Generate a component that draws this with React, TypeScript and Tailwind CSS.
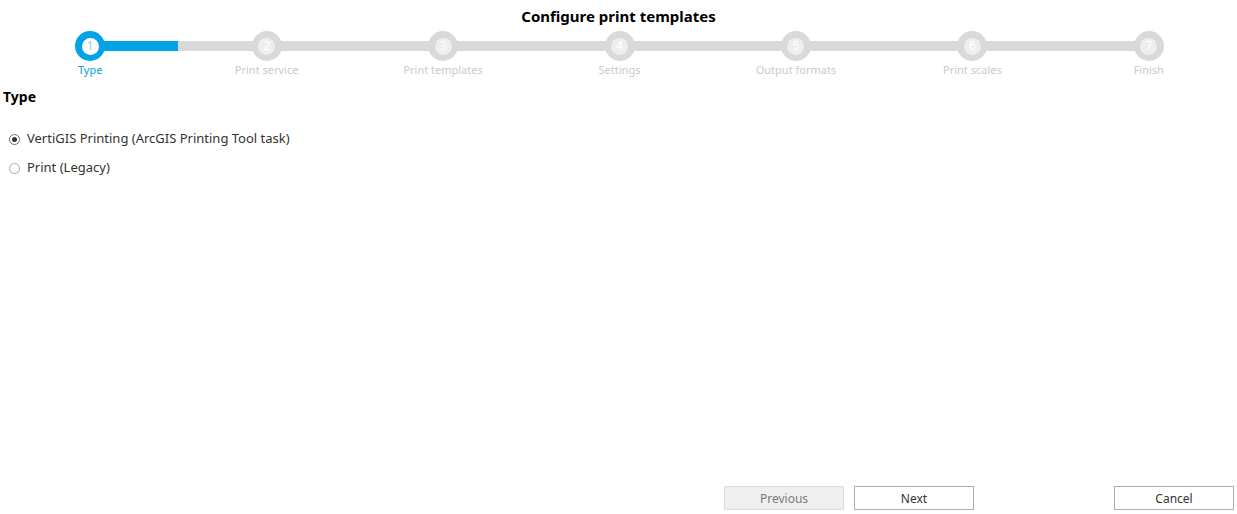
import React from "react";

const steps = ["Type", "Print service", "Print templates", "Settings", "Output formats", "Print scales", "Finish"];

function Step({ label, index, total }: { label: string; index: number; total: number }) {
  const active = index === 0;
  const leftBar = index === 0 ? "bg-transparent" : "bg-[#d9d9d9]";
  const rightBar = index === total - 1 ? "bg-transparent" : active ? "bg-[#00a3e6]" : "bg-[#d9d9d9]";
  return (
    <div className="flex flex-col items-center">
      <div className="flex items-center w-full">
        <div className={`flex-1 h-[10px] ${leftBar}`} />
        <div
          className={`relative z-10 -mx-[3px] w-[30px] h-[30px] rounded-full flex items-center justify-center shrink-0 ${
            active ? "bg-[#00a3e6]" : "bg-[#d9d9d9]"
          }`}
        >
          <div
            className={`w-[17px] h-[17px] rounded-full flex items-center justify-center text-[12px] leading-none ${
              active ? "bg-white text-[#8fd0f0]" : "bg-[#eeeeee] text-white"
            }`}
          >
            {index + 1}
          </div>
        </div>
        <div className={`flex-1 h-[10px] ${rightBar}`} />
      </div>
      <div
        className={`mt-px text-[11px] leading-[15px] ${active ? "text-[#0a9fe0]" : "text-[#cacaca]"}`}
      >
        {label}
      </div>
    </div>
  );
}

function Radio({ checked, label }: { checked: boolean; label: string }) {
  return (
    <div className="flex items-center h-[20px]">
      <div
        className={`ml-[9px] w-[11px] h-[11px] rounded-full border flex items-center justify-center bg-white ${
          checked ? "border-[#6b6b6b]" : "border-[#a8a8a8]"
        }`}
      >
        {checked && <div className="w-[5px] h-[5px] rounded-full bg-[#333]" />}
      </div>
      <span className="ml-[7px] text-[13px] text-[#333]">{label}</span>
    </div>
  );
}

export default function App() {
  return (
    <div
      className="h-screen w-full bg-white flex flex-col overflow-hidden"
      style={{ fontFamily: '"Noto Sans", "Open Sans", sans-serif' }}
    >
      <div className="pt-[6px] text-center text-[15px] leading-[20px] font-bold text-black">
        Configure print templates
      </div>
      <div className="mt-[5px] grid grid-cols-7 pl-[2px]">
        {steps.map((s, i) => (
          <Step key={s} label={s} index={i} total={steps.length} />
        ))}
      </div>
      <div className="mt-[11px] pl-[3px] text-[14px] leading-[18px] font-bold text-black">Type</div>
      <div className="mt-[23px] flex flex-col gap-[9px]">
        <Radio checked label="VertiGIS Printing (ArcGIS Printing Tool task)" />
        <Radio checked={false} label="Print (Legacy)" />
      </div>
      <div className="flex-1" />
      <div className="flex justify-end items-center pb-[4px] pr-[3px]">
        <button className="w-[120px] h-[24px] pt-px border border-[#dcdcdc] bg-[#efefef] text-[12px] text-[#7a7a7a]">
          Previous
        </button>
        <button className="ml-[10px] w-[120px] h-[24px] pt-px border border-[#adadad] bg-white text-[12px] text-[#333]">
          Next
        </button>
        <button className="ml-[140px] w-[120px] h-[24px] pt-px border border-[#adadad] bg-white text-[12px] text-[#333]">
          Cancel
        </button>
      </div>
    </div>
  );
}
